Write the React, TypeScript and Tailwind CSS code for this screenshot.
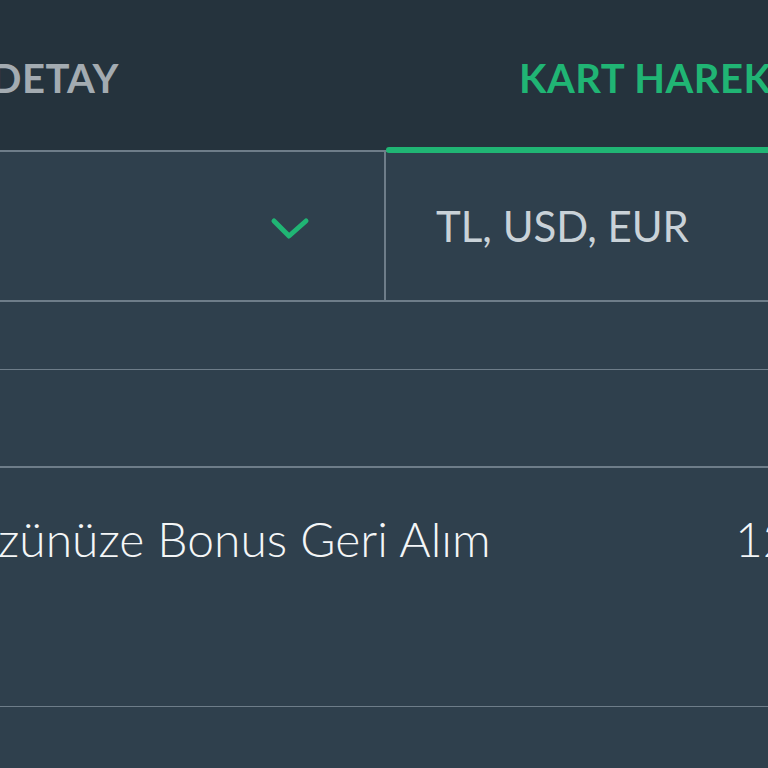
const font = { fontFamily: "Lato, 'Open Sans', sans-serif" };

function Chevron() {
  return (
    <svg width="42" height="28" viewBox="0 0 42 28" fill="none">
      <polyline
        points="4,6 19,21 36,6"
        stroke="#20b574"
        strokeWidth="5"
        strokeLinecap="round"
        strokeLinejoin="round"
      />
    </svg>
  );
}

export default function App() {
  return (
    <div
      className="relative w-[768px] h-[768px] overflow-hidden bg-[#2f404d]"
      style={font}
    >
      {/* Tabs */}
      <div className="flex h-[150px] bg-[#25333d]">
        <div className="flex w-[385px] shrink-0 items-center pt-[5px]">
          <span className="ml-[-9px] text-[40px] font-bold leading-none tracking-[0.5px] text-[#a3abb1]">
            DETAY
          </span>
        </div>
        <div className="flex min-w-0 flex-1 items-center pt-[5px]">
          <span className="ml-[134px] whitespace-nowrap text-[40px] font-bold leading-none tracking-[0.5px] text-[#20b574]">
            KART HAREKETLERİ
          </span>
        </div>
      </div>

      {/* active tab indicator */}
      <div className="absolute left-[386px] top-[147px] h-[6px] w-[400px] rounded-full bg-[#20b574]" />

      {/* Filters */}
      <div className="flex h-[152px] border-y-2 border-[#6e7d89]">
        <div className="flex w-[386px] shrink-0 items-center justify-end border-r-2 border-[#6e7d89] pr-[72px] pt-[6px]">
          <Chevron />
        </div>
        <div className="flex min-w-0 flex-1 items-center pl-[50px]">
          <span className="whitespace-nowrap text-[42px] leading-none text-[#c9d2d8]">
            TL, USD, EUR
          </span>
        </div>
      </div>

      <div className="h-[68px] border-b border-[#6e7d89]" />
      <div className="h-[98px] border-b-2 border-[#6e7d89]" />

      {/* Transaction row */}
      <div className="flex h-[239px] items-start border-b border-[#6e7d89] pt-[47px]">
        <div className="w-[735px] shrink-0">
          <span className="ml-[-2px] block whitespace-nowrap text-[48px] font-light leading-none text-[#f4f6f7]">
            zünüze Bonus Geri Alım
          </span>
        </div>
        <span className="whitespace-nowrap text-[48px] font-light leading-none text-[#f4f6f7]">
          125,00
        </span>
      </div>
    </div>
  );
}
